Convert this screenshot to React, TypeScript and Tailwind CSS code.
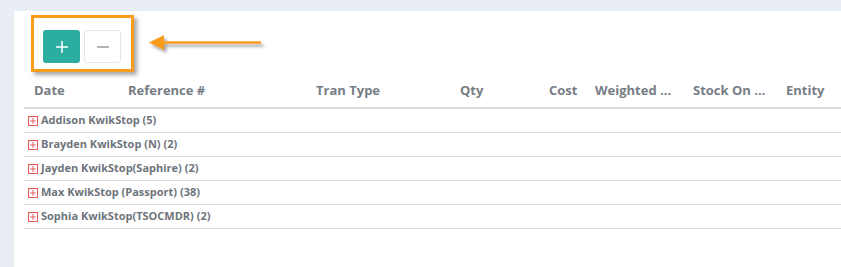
import React from "react";

const cols = [
  "w-[94px]",
  "w-[188px]",
  "w-[144px]",
  "w-[89px]",
  "w-[46px]",
  "w-[98px]",
  "w-[93px]",
  "flex-1",
];
const headers = ["Date", "Reference #", "Tran Type", "Qty", "Cost", "Weighted ...", "Stock On ...", "Entity"];
const rows = [
  "Addison KwikStop (5)",
  "Brayden KwikStop (N) (2)",
  "Jayden KwikStop(Saphire) (2)",
  "Max KwikStop (Passport) (38)",
  "Sophia KwikStop(TSOCMDR) (2)",
];

function PlusBox() {
  return (
    <svg width="10" height="10" viewBox="0 0 10 10" className="shrink-0">
      <rect x="0.5" y="0.5" width="9" height="9" fill="#fff" stroke="#ec5a55" strokeWidth="1" />
      <path d="M5 2.2V7.8M2.2 5H7.8" stroke="#ec5a55" strokeWidth="1" />
    </svg>
  );
}

export default function App() {
  return (
    <div
      className="relative h-[267px] w-[841px] overflow-hidden bg-[#e9edf4] pt-[11px] pl-[14px]"
      style={{ fontFamily: '"Open Sans", "Liberation Sans", sans-serif' }}
    >
      <div className="h-full bg-white pl-[10px]">
        <div className="flex h-[66px] items-start gap-[4px] pt-[19px] pl-[19px]">
          <button className="flex h-[33px] w-[37px] items-center justify-center rounded-[3px] bg-[#2bae9f]">
            <svg width="14" height="14" viewBox="0 0 14 14">
              <path d="M7 1V13M1 7H13" stroke="#fff" strokeWidth="1.5" />
            </svg>
          </button>
          <button className="flex h-[33px] w-[37px] items-center justify-center rounded-[3px] border border-[#e6e6e6] bg-white">
            <svg width="14" height="4" viewBox="0 0 14 4">
              <path d="M1 2H13" stroke="#9a9a9a" strokeWidth="1.5" />
            </svg>
          </button>
        </div>
        <div className="flex h-[32px] items-center border-b-2 border-[#dddddd] pb-[2px] text-[13px] font-bold text-[#777d85]">
          {headers.map((h, i) => (
            <div key={h} className={`${cols[i]} shrink-0 pl-[10px] whitespace-nowrap`}>
              {h}
            </div>
          ))}
        </div>
        {rows.map((r) => (
          <div
            key={r}
            className="flex h-[24px] items-center gap-[3px] border-b border-[#dddddd] pl-[4px] text-[11px] font-bold text-[#6e747b]"
          >
            <PlusBox />
            <span className="whitespace-nowrap">{r}</span>
          </div>
        ))}
      </div>

      {/* annotation box */}
      <div className="absolute left-[31px] top-[15px] h-[57px] w-[103px] border-[3px] border-[#f89c1c] shadow-[3px_3px_4px_rgba(0,0,0,0.35)]" />

      {/* annotation arrow */}
      <svg className="absolute left-[145px] top-[30px]" width="125" height="26" viewBox="0 0 125 26">
        <defs>
          <filter id="sh" x="-20%" y="-50%" width="140%" height="200%">
            <feDropShadow dx="2.5" dy="3" stdDeviation="1.5" floodColor="#000" floodOpacity="0.35" />
          </filter>
        </defs>
        <g filter="url(#sh)">
          <path d="M17 12.5H115" stroke="#f89c1c" strokeWidth="2.6" strokeLinecap="round" />
          <path d="M4 12.5L19 5V20Z" fill="#f89c1c" />
        </g>
      </svg>
    </div>
  );
}
